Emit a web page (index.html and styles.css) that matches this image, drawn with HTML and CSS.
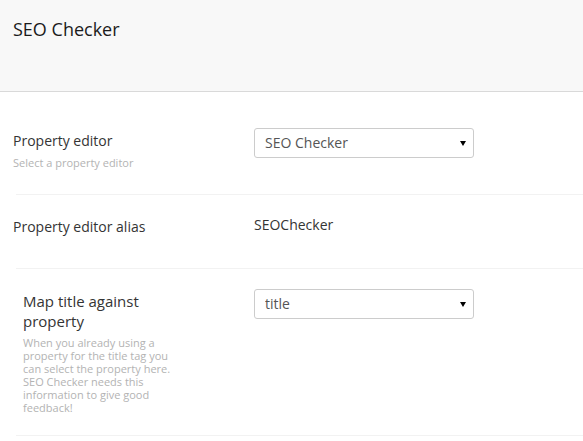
FILE: index.html
```html
<!DOCTYPE html>
<html>
<head>
<meta charset="utf-8">
<link rel="stylesheet" href="styles.css">
</head>
<body>
<div class="header">
  <div class="title">SEO Checker</div>
</div>
<div class="content">
  <div class="row row-first">
    <div class="label-col">
      <div class="label">Property editor</div>
      <div class="desc">Select a property editor</div>
    </div>
    <div class="control-col">
      <div class="select-wrap">
        <select class="select"><option>SEO Checker</option></select>
      </div>
    </div>
  </div>
  <div class="divider"></div>
  <div class="row row-alias">
    <div class="label-col">
      <div class="label label-alias">Property editor alias</div>
    </div>
    <div class="control-col">
      <div class="value">SEOChecker</div>
    </div>
  </div>
  <div class="divider"></div>
  <div class="row row-nested">
    <div class="label-col label-col-nested">
      <div class="label label-big">Map title against property</div>
      <div class="desc">When you already using a property for the title tag you can select the property here. SEO Checker needs this information to give good feedback!</div>
    </div>
    <div class="control-col">
      <div class="select-wrap">
        <select class="select"><option>title</option></select>
      </div>
    </div>
  </div>
  <div class="divider"></div>
</div>
</body>
</html>
```
FILE: styles.css
```css
html, body {
  margin: 0;
  padding: 0;
  background: #ffffff;
}
body {
  font-family: "Open Sans", "Liberation Sans", sans-serif;
  color: #343434;
  width: 583px;
  height: 441px;
  overflow: hidden;
}
.header {
  height: 91px;
  background: #f8f8f8;
  border-bottom: 1px solid #d9d9d9;
  box-sizing: border-box;
  height: 92px;
  padding: 17px 0 0 13px;
}
.title {
  font-size: 18px;
  line-height: 24px;
  color: #1b1b1b;
}
.row {
  display: flex;
  padding-left: 13px;
}
.row-first {
  padding-top: 36px;
  padding-bottom: 25px;
}
.row-alias {
  padding-top: 20px;
  padding-bottom: 31px;
}
.row-nested {
  padding-top: 20px;
  padding-bottom: 21px;
  padding-left: 23px;
}
.label-col {
  width: 241px;
  flex: none;
}
.label-col-nested {
  width: 231px;
}
.label-col-nested .label,
.label-col-nested .desc {
  max-width: 160px;
}
.label {
  font-size: 14px;
  line-height: 20px;
  margin-top: 3px;
}
.label-alias {
  margin-top: 2px;
}
.label-big {
  font-size: 15px;
  margin-top: 2px;
}
.desc {
  font-size: 11px;
  line-height: 13px;
  color: #b3b3b3;
  margin-top: 5px;
}
.control-col {
  flex: 1;
}
.value {
  font-size: 14px;
  line-height: 20px;
  color: #343434;
}
.select-wrap {
  position: relative;
  width: 220px;
}
.select-wrap::after {
  content: "";
  position: absolute;
  right: 8px;
  top: 13px;
  border-left: 3px solid transparent;
  border-right: 3px solid transparent;
  border-top: 5px solid #000;
}
.select {
  -webkit-appearance: none;
  appearance: none;
  display: block;
  width: 220px;
  height: 30px;
  box-sizing: border-box;
  border: 1px solid #cccccc;
  border-radius: 3px;
  background: #ffffff;
  padding: 0 20px 0 10px;
  margin: 0;
  font-family: "Open Sans", "Liberation Sans", sans-serif;
  font-size: 14px;
  line-height: 20px;
  color: #555555;
  outline: none;
}
.divider {
  height: 1px;
  background: #f2f2f2;
  margin-left: 16px;
}
```
